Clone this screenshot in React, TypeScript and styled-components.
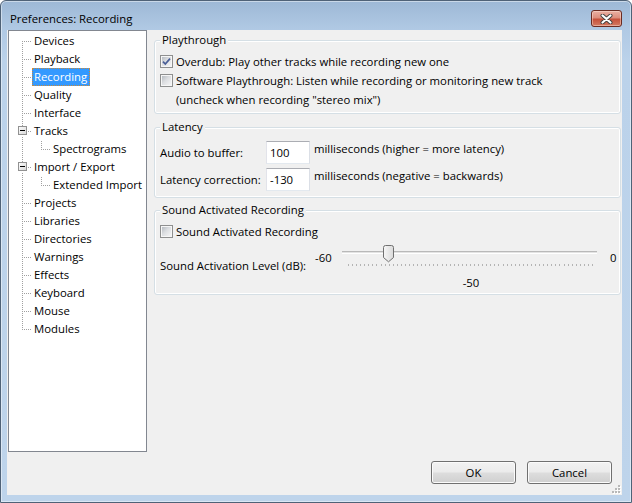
import React from "react";
import styled, { createGlobalStyle } from "styled-components";

const FONT = `"Open Sans", "Noto Sans", Arial, sans-serif`;
const SIZE = "11.35px";

const GlobalStyle = createGlobalStyle`
  html, body { margin: 0; padding: 0; background: #ffffff; }
  body { width: 632px; height: 503px; overflow: hidden; font-family: ${FONT}; font-size: ${SIZE}; color: #000; }
`;

const Window = styled.div`
  box-sizing: border-box;
  width: 632px;
  height: 503px;
  border: 1px solid #4f6277;
  border-radius: 6px 6px 0 0;
  background: linear-gradient(180deg, #9db8d6 0px, #b0c9e4 28px, #bbd2ea 60px, #bed4eb 100%);
  box-shadow: inset 0 0 0 1px rgba(255, 255, 255, 0.45);
  display: flex;
  flex-direction: column;
  font-family: ${FONT};
  font-size: ${SIZE};
  color: #000;
`;

const TitleBar = styled.div`
  height: 29px;
  flex: none;
  display: flex;
  align-items: flex-start;
  justify-content: space-between;
  padding: 0 9px 0 9px;
`;

const TitleText = styled.span`
  margin-top: 10px;
  line-height: 16px;
  color: #000;
`;

const CloseButton = styled.div`
  margin-top: 9px;
  width: 31px;
  height: 17px;
  box-sizing: border-box;
  border: 1px solid #6a2b22;
  border-radius: 3px;
  background: linear-gradient(180deg, #eab0a3 0%, #dd8e7d 45%, #c6513b 55%, #d37a63 100%);
  box-shadow: inset 0 0 0 1px rgba(255, 230, 220, 0.45);
  display: flex;
  align-items: center;
  justify-content: center;
`;

const Client = styled.div`
  flex: 1;
  margin: 0 9px 7px 6px;
  background: #f0f0f0;
  display: flex;
  flex-direction: column;
  position: relative;
`;

const Main = styled.div`
  display: flex;
  align-items: flex-start;
`;

const Tree = styled.div`
  width: 139px;
  height: 422px;
  box-sizing: border-box;
  margin-left: 1px;
  padding-top: 1px;
  border: 1px solid #828790;
  background: #ffffff;
  display: flex;
  flex-direction: column;
`;

const TreeRow = styled.div`
  height: 18px;
  display: flex;
  align-items: stretch;
`;

const TreeLabel = styled.span<{ $selected?: boolean }>`
  box-sizing: border-box;
  height: 18px;
  line-height: 17px;
  padding: 0 3px 0 2px;
  white-space: nowrap;
  color: ${(p) => (p.$selected ? "#ffffff" : "#000000")};
  background: ${(p) => (p.$selected ? "#3399ff" : "transparent")};
  outline: ${(p) => (p.$selected ? "1px dotted #c98a3c" : "none")};
  outline-offset: -1px;
`;

const RightPanel = styled.div`
  margin-left: 7px;
  width: 467px;
  display: flex;
  flex-direction: column;
`;

const Group = styled.fieldset<{ $top: number; $padTop: number; $padBottom: number }>`
  margin: ${(p) => p.$top}px 0 0 0;
  padding: ${(p) => p.$padTop}px 5px ${(p) => p.$padBottom}px 5px;
  border: 1px solid #d5dfe5;
  border-radius: 3px;
  box-shadow: inset 0 0 0 1px #ffffff;
  min-width: 0;
`;

const Legend = styled.legend`
  padding: 0 2px;
  margin: 0;
  line-height: 14px;
  background: #f0f0f0;
  color: #000;
`;

const CheckRow = styled.div`
  height: 19px;
  display: flex;
  align-items: center;
  gap: 3px;
  white-space: nowrap;
`;

const NoteRow = styled.div`
  height: 19px;
  display: flex;
  align-items: center;
  padding-left: 16px;
  white-space: nowrap;
`;

const CheckBoxOuter = styled.span`
  flex: none;
  width: 13px;
  height: 13px;
  box-sizing: border-box;
  border: 1px solid #8e8f8f;
  padding: 1px;
  background: #f6f6f6;
  display: flex;
`;

const CheckBoxInner = styled.span`
  width: 9px;
  height: 9px;
  background: linear-gradient(135deg, #b7bcc2 0%, #dcdee1 45%, #f4f4f5 100%);
  display: flex;
  align-items: center;
  justify-content: center;
`;

const LatencyGrid = styled.div`
  display: grid;
  grid-template-columns: 106px 44px auto;
  grid-auto-rows: 23px;
  row-gap: 4px;
`;

const FieldLabel = styled.span`
  align-self: center;
  white-space: nowrap;
  line-height: 16px;
`;

const NumberField = styled.input`
  width: 44px;
  height: 23px;
  box-sizing: border-box;
  margin: 0;
  border: 1px solid;
  border-color: #abadb3 #dbdfe6 #e3e9ef #e2e3ea;
  padding: 0 0 0 3px;
  background: #ffffff;
  font-family: ${FONT};
  font-size: ${SIZE};
  color: #000;
  outline: none;
`;

const Units = styled.span`
  align-self: start;
  margin-left: 4px;
  line-height: 16px;
  white-space: nowrap;
`;

const SliderRow = styled.div`
  margin-top: 2px;
  display: grid;
  grid-template-columns: 155px 23px 263px auto;
  align-items: start;
`;

const SliderLabel = styled.span<{ $offset: number; $pad?: number }>`
  margin-top: ${(p) => p.$offset}px;
  padding-left: ${(p) => p.$pad ?? 0}px;
  line-height: 16px;
  white-space: nowrap;
`;

const SliderBox = styled.div`
  display: flex;
  flex-direction: column;
`;

const TrackArea = styled.div`
  position: relative;
  height: 20px;
  display: flex;
  align-items: center;
  padding: 0 4px;
`;

const Channel = styled.div`
  flex: 1;
  height: 3px;
  box-sizing: border-box;
  border-top: 1px solid #b9b9b9;
  border-bottom: 1px solid #ffffff;
  background: #e3e3e3;
  margin-top: -1px;
`;

const Thumb = styled.svg`
  position: absolute;
  top: 2px;
`;

const Ticks = styled.svg`
  display: block;
`;

const SliderValue = styled.span`
  margin-top: 8px;
  line-height: 16px;
  text-align: center;
  padding-left: 3px;
`;

const Footer = styled.div`
  display: flex;
  justify-content: flex-end;
  gap: 11px;
  padding: 9px 10px 11px 0;
`;

const Button = styled.button`
  width: 85px;
  height: 23px;
  box-sizing: border-box;
  padding: 0;
  margin: 0;
  border: 1px solid #707070;
  border-radius: 3px;
  background: linear-gradient(180deg, #f2f2f2 0%, #ebebeb 48%, #dddddd 52%, #cfcfcf 100%);
  box-shadow: inset 0 0 0 1px #fbfbfb;
  font-family: ${FONT};
  font-size: ${SIZE};
  color: #000;
`;

const Grip = styled.svg`
  position: absolute;
  right: 1px;
  bottom: 1px;
`;

type TreeItem = { label: string; level: 0 | 1; expander?: boolean; selected?: boolean };

const treeItems: TreeItem[] = [
  { label: "Devices", level: 0 },
  { label: "Playback", level: 0 },
  { label: "Recording", level: 0, selected: true },
  { label: "Quality", level: 0 },
  { label: "Interface", level: 0 },
  { label: "Tracks", level: 0, expander: true },
  { label: "Spectrograms", level: 1 },
  { label: "Import / Export", level: 0, expander: true },
  { label: "Extended Import", level: 1 },
  { label: "Projects", level: 0 },
  { label: "Libraries", level: 0 },
  { label: "Directories", level: 0 },
  { label: "Warnings", level: 0 },
  { label: "Effects", level: 0 },
  { label: "Keyboard", level: 0 },
  { label: "Mouse", level: 0 },
  { label: "Modules", level: 0 },
];

function Guide({ item, first, last }: { item: TreeItem; first: boolean; last: boolean }) {
  const w = item.level ? 42 : 23;
  const dots: [number, number][] = [];
  const vTop = first ? 9 : 1;
  const vBottom = last ? 9 : 17;
  for (let y = vTop; y <= vBottom; y += 2) {
    if (item.expander && y >= 4 && y <= 14) continue;
    dots.push([13, y]);
  }
  if (item.level === 0) {
    const hStart = item.expander ? 19 : 15;
    for (let x = hStart; x <= 21; x += 2) dots.push([x, 9]);
  } else {
    for (let y = 1; y <= 9; y += 2) dots.push([32, y]);
    for (let x = 34; x <= 40; x += 2) dots.push([x, 9]);
  }
  return (
    <svg width={w} height={18} style={{ flex: "none" }} shapeRendering="crispEdges">
      <defs>
        <linearGradient id="exp" x1="0" y1="0" x2="1" y2="1">
          <stop offset="0" stopColor="#ffffff" />
          <stop offset="1" stopColor="#d6d6d6" />
        </linearGradient>
      </defs>
      {dots.map(([x, y], i) => (
        <rect key={i} x={x} y={y} width={1} height={1} fill="#a0a0a0" />
      ))}
      {item.expander && (
        <g>
          <rect x={9.5} y={4.5} width={8} height={8} fill="url(#exp)" stroke="#919191" />
          <rect x={11} y={8} width={5} height={1} fill="#000000" />
        </g>
      )}
    </svg>
  );
}

function CheckBox({ checked }: { checked?: boolean }) {
  return (
    <CheckBoxOuter>
      <CheckBoxInner>
        {checked && (
          <svg width={9} height={9} viewBox="0 0 9 9">
            <path d="M1 4.6 L3.3 7 L8 1.6" fill="none" stroke="#4a5f97" strokeWidth={1.7} />
          </svg>
        )}
      </CheckBoxInner>
    </CheckBoxOuter>
  );
}

function Slider({ min, max, value }: { min: number; max: number; value: number }) {
  const span = 244;
  const start = 10;
  const center = start + ((value - min) / (max - min)) * span;
  const ticks: number[] = [];
  for (let i = 0; i <= max - min; i++) ticks.push(Math.round(start + (i * span) / (max - min)));
  return (
    <SliderBox>
      <TrackArea>
        <Channel />
        <Thumb width={11} height={18} viewBox="0 0 11 18" style={{ left: Math.round(center - 5.5) }}>
          <defs>
            <linearGradient id="thumb" x1="0" y1="0" x2="1" y2="0">
              <stop offset="0" stopColor="#f7f7f7" />
              <stop offset="1" stopColor="#dadada" />
            </linearGradient>
          </defs>
          <path
            d="M0.5 2.5 Q0.5 0.5 2.5 0.5 H8.5 Q10.5 0.5 10.5 2.5 V12.5 L5.5 16.8 L0.5 12.5 Z"
            fill="url(#thumb)"
            stroke="#707070"
          />
        </Thumb>
      </TrackArea>
      <Ticks width={263} height={4} shapeRendering="crispEdges">
        {ticks.map((x, i) => (
          <rect key={i} x={x} y={1} width={1} height={2} fill="#b4b4b4" />
        ))}
      </Ticks>
      <SliderValue>{value}</SliderValue>
    </SliderBox>
  );
}

export default function App() {
  return (
    <>
      <GlobalStyle />
      <Window>
        <TitleBar>
          <TitleText>Preferences: Recording</TitleText>
          <CloseButton>
            <svg width={13} height={10} viewBox="0 0 13 10">
              <path d="M2.5 1.5 L10.5 8.5 M10.5 1.5 L2.5 8.5" stroke="#3e3e3e" strokeWidth={4} strokeLinecap="round" />
              <path d="M2.5 1.5 L10.5 8.5 M10.5 1.5 L2.5 8.5" stroke="#ffffff" strokeWidth={2.2} strokeLinecap="round" />
            </svg>
          </CloseButton>
        </TitleBar>
        <Client>
          <Main>
            <Tree>
              {treeItems.map((item, i) => (
                <TreeRow key={item.label}>
                  <Guide item={item} first={i === 0} last={i === treeItems.length - 1} />
                  <TreeLabel $selected={item.selected}>{item.label}</TreeLabel>
                </TreeRow>
              ))}
            </Tree>
            <RightPanel>
              <Group $top={3} $padTop={5} $padBottom={4}>
                <Legend>Playthrough</Legend>
                <CheckRow>
                  <CheckBox checked />
                  <span>Overdub: Play other tracks while recording new one</span>
                </CheckRow>
                <CheckRow>
                  <CheckBox />
                  <span>Software Playthrough: Listen while recording or monitoring new track</span>
                </CheckRow>
                <NoteRow>(uncheck when recording "stereo mix")</NoteRow>
              </Group>
              <Group $top={6} $padTop={7} $padBottom={6}>
                <Legend>Latency</Legend>
                <LatencyGrid>
                  <FieldLabel>Audio to buffer:</FieldLabel>
                  <NumberField value="100" readOnly />
                  <Units>milliseconds (higher = more latency)</Units>
                  <FieldLabel>Latency correction:</FieldLabel>
                  <NumberField value="-130" readOnly />
                  <Units>milliseconds (negative = backwards)</Units>
                </LatencyGrid>
              </Group>
              <Group $top={5} $padTop={5} $padBottom={3}>
                <Legend>Sound Activated Recording</Legend>
                <CheckRow>
                  <CheckBox />
                  <span>Sound Activated Recording</span>
                </CheckRow>
                <SliderRow>
                  <SliderLabel $offset={15}>Sound Activation Level (dB):</SliderLabel>
                  <SliderLabel $offset={7}>-60</SliderLabel>
                  <Slider min={-60} max={0} value={-50} />
                  <SliderLabel $offset={7} $pad={9}>0</SliderLabel>
                </SliderRow>
              </Group>
            </RightPanel>
          </Main>
          <Footer>
            <Button>OK</Button>
            <Button>Cancel</Button>
          </Footer>
          <Grip width={10} height={10} shapeRendering="crispEdges">
            {[
              [7, 1],
              [7, 4],
              [4, 4],
              [7, 7],
              [4, 7],
              [1, 7],
            ].map(([x, y], i) => (
              <g key={i}>
                <rect x={x + 1} y={y + 1} width={2} height={2} fill="#ffffff" />
                <rect x={x} y={y} width={2} height={2} fill="#b8b8b8" />
              </g>
            ))}
          </Grip>
        </Client>
      </Window>
    </>
  );
}
